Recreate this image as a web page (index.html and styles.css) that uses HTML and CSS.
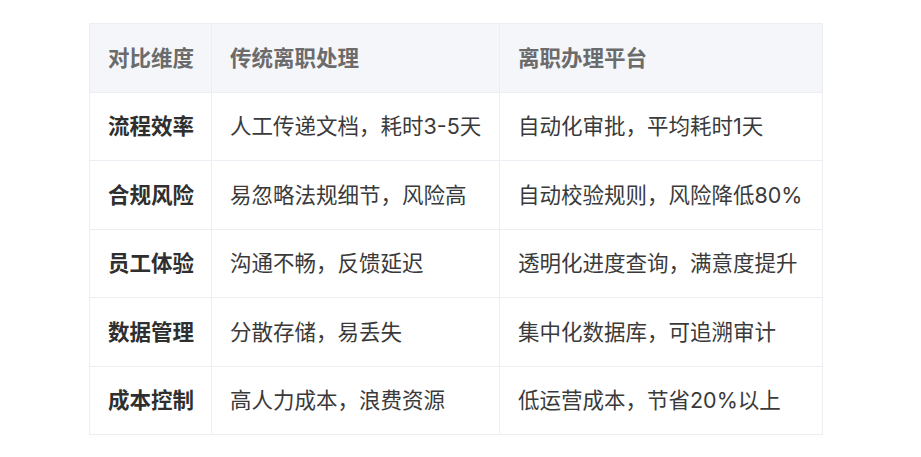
FILE: index.html
```html
<!DOCTYPE html>
<html lang="zh-CN">
<head>
<meta charset="utf-8">
<link rel="stylesheet" href="styles.css">
</head>
<body>
<div class="wrap">
<table class="cmp">
  <colgroup>
    <col class="c1"><col class="c2"><col class="c3">
  </colgroup>
  <thead>
    <tr><th>对比维度</th><th>传统离职处理</th><th>离职办理平台</th></tr>
  </thead>
  <tbody>
    <tr><td class="dim">流程效率</td><td>人工传递文档，耗时3-5天</td><td>自动化审批，平均耗时1天</td></tr>
    <tr><td class="dim">合规风险</td><td>易忽略法规细节，风险高</td><td>自动校验规则，风险降低80%</td></tr>
    <tr><td class="dim">员工体验</td><td>沟通不畅，反馈延迟</td><td>透明化进度查询，满意度提升</td></tr>
    <tr><td class="dim">数据管理</td><td>分散存储，易丢失</td><td>集中化数据库，可追溯审计</td></tr>
    <tr><td class="dim">成本控制</td><td>高人力成本，浪费资源</td><td>低运营成本，节省20%以上</td></tr>
  </tbody>
</table>
</div>
</body>
</html>
```
FILE: styles.css
```css
html, body {
  margin: 0;
  padding: 0;
  background: #ffffff;
}
.wrap {
  padding: 23px 0 0 89px;
}
.cmp {
  border-collapse: collapse;
  width: 733px;
  table-layout: fixed;
  font-family: "Inter", "Noto Sans CJK SC", sans-serif;
  font-size: 21.5px;
  color: #3a3a3a;
}
.c1 { width: 122px; }
.c2 { width: 288px; }
.c3 { width: 323px; }
.cmp th, .cmp td {
  border: 1px solid #eceef3;
  padding: 0 0 0 18px;
  height: 67.5px;
  line-height: 30px;
  text-align: left;
  white-space: nowrap;
}
.cmp th {
  background: #f5f6fa;
  color: #6b6b6b;
  font-weight: 700;
}
.cmp td.dim {
  font-weight: 700;
  color: #2f2f2f;
}
```
